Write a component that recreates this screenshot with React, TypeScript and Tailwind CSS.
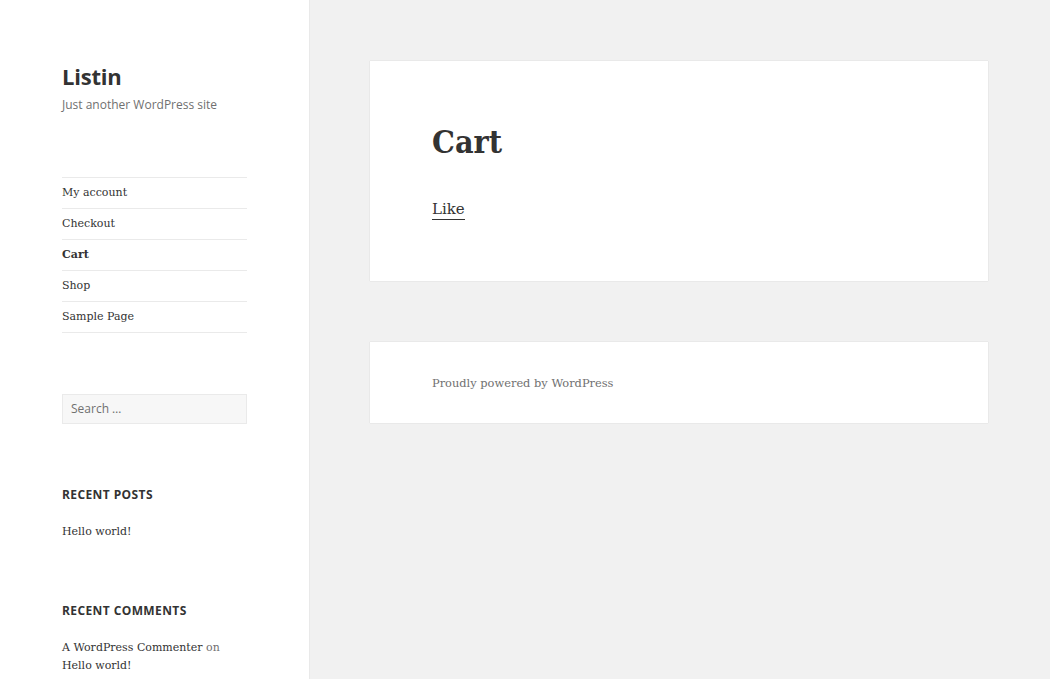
const serif = { fontFamily: '"DejaVu Serif", "Liberation Serif", serif' };
const serifTitle = { fontFamily: '"DejaVu Serif Condensed", "DejaVu Serif", serif' };

const navItems = [
  { label: 'My account', current: false },
  { label: 'Checkout', current: false },
  { label: 'Cart', current: true },
  { label: 'Shop', current: false },
  { label: 'Sample Page', current: false },
];

function Sidebar() {
  return (
    <aside className="w-[310px] shrink-0 bg-white border-r border-[#e9e9e9] min-h-[679px] pl-[62px]">
      <div className="w-[185px]">
        {/* Branding */}
        <h1 className="mt-[62px] text-[22px] leading-[28px] font-bold text-[#333] font-['Open_Sans',sans-serif] tracking-[-0.2px]">
          Listin
        </h1>
        <p className="mt-[6px] text-[12px] leading-[18px] text-[#707070] font-['Open_Sans',sans-serif]">
          Just another WordPress site
        </p>

        {/* Menu */}
        <nav className="mt-[63px] border-b border-[#eaeaea]">
          {navItems.map((item) => (
            <div
              key={item.label}
              className={`h-[31px] border-t border-[#eaeaea] flex items-center pt-[1px] text-[11px] text-[#333] ${
                item.current ? 'font-bold' : ''
              }`}
              style={serif}
            >
              {item.label}
            </div>
          ))}
        </nav>

        {/* Search */}
        <div className="mt-[61px] h-[30px] border border-[#eaeaea] bg-[#f7f7f7] flex items-center px-[8px] text-[12px] text-[#707070] font-['Open_Sans',sans-serif]">
          Search …
        </div>

        {/* Widgets */}
        <h2 className="mt-[62px] text-[12px] leading-[18px] font-bold uppercase tracking-[0.4px] text-[#333] font-['Open_Sans',sans-serif]">
          Recent Posts
        </h2>
        <p className="mt-[19px] text-[11px] leading-[18px] text-[#333]" style={serif}>
          Hello world!
        </p>

        <h2 className="mt-[61px] text-[12px] leading-[18px] font-bold uppercase tracking-[0.4px] text-[#333] font-['Open_Sans',sans-serif]">
          Recent Comments
        </h2>
        <p className="mt-[19px] text-[11px] leading-[18px] text-[#333]" style={serif}>
          A WordPress Commenter <span className="text-[#707070]">on</span>
          <br />
          Hello world!
        </p>
      </div>
    </aside>
  );
}

export default function App() {
  return (
    <div className="flex w-[1050px] min-h-[679px] bg-[#f1f1f1] overflow-hidden">
      <Sidebar />

      <main className="flex-1 pl-[60px] pr-[62px] pt-[61px]">
        {/* Page */}
        <article className="bg-white shadow-[0_0_1px_rgba(0,0,0,0.2)] px-[62px] pt-[59px] pb-[60px]">
          <h1 className="text-[32px] leading-[44px] font-bold text-[#333]" style={serifTitle}>
            Cart
          </h1>
          <p className="mt-[33px] text-[15px] leading-[24px] text-[#333]" style={serif}>
            <span className="border-b border-[#333] pb-[1px]">Like</span>
          </p>
        </article>

        {/* Footer */}
        <footer className="mt-[61px] bg-white shadow-[0_0_1px_rgba(0,0,0,0.2)] px-[62px] pt-[32px] pb-[31px]">
          <p className="text-[11.4px] leading-[18px] text-[#707070]" style={serif}>
            Proudly powered by WordPress
          </p>
        </footer>
      </main>
    </div>
  );
}
